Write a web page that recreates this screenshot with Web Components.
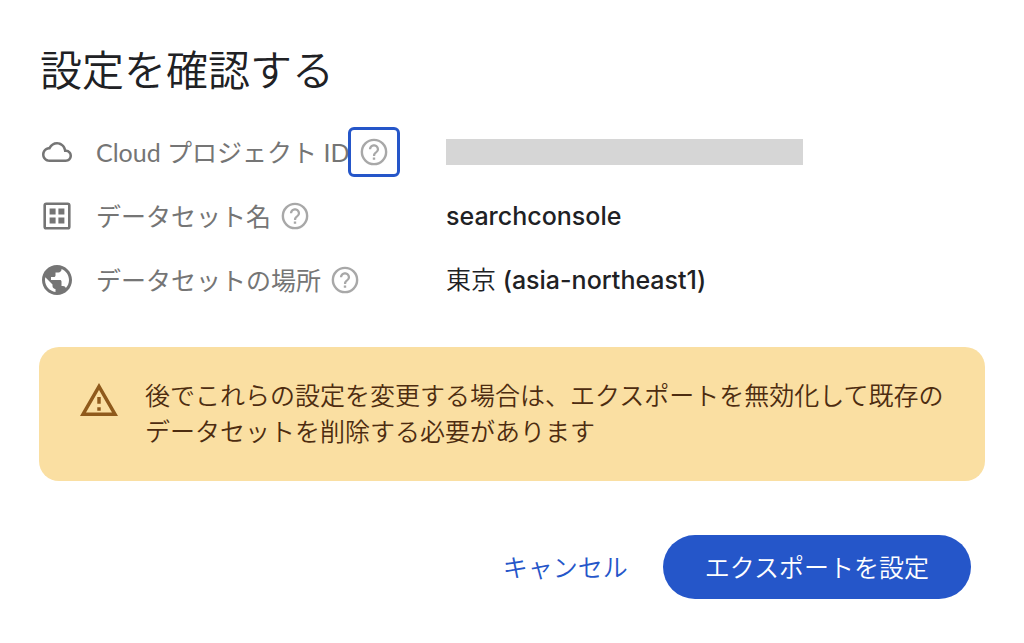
<!DOCTYPE html>
<html lang="ja">
<head>
  <meta charset="utf-8">
  <meta name="viewport" content="width=device-width, initial-scale=1">
  <title>設定を確認する</title>
  <style>
    body {
      margin: 0;
      background: #fff;
      color: #202124;
      font-family: Lato, 'Noto Sans CJK JP', sans-serif;
      font-size: 25px;
      line-height: 36px;
    }

    .place {
      font-weight: 350;
    }
  </style>
</head>
<body>
  <confirm-dialog>
    <span slot="title">設定を確認する</span>
    <setting-row icon="cloud" highlighted>
      <span slot="label">Cloud プロジェクト ID</span>
      <redacted-value></redacted-value>
    </setting-row>
    <setting-row icon="dataset">
      <span slot="label">データセット名</span>
      searchconsole
    </setting-row>
    <setting-row icon="globe">
      <span slot="label">データセットの場所</span>
      <span class="place">東京</span> (asia-northeast1)
    </setting-row>
    <warning-note slot="note">後でこれらの設定を変更する場合は、エクスポートを無効化して既存のデータセットを削除する必要があります</warning-note>
    <action-button slot="actions">キャンセル</action-button>
    <action-button slot="actions" primary>エクスポートを設定</action-button>
  </confirm-dialog>

  <script>
    const icons = {
      cloud: `<svg viewBox="0 0 24 24"><path d="M19.35 10.04C18.67 6.59 15.64 4 12 4 9.11 4 6.6 5.64 5.35 8.04 2.34 8.36 0 10.91 0 14c0 3.31 2.69 6 6 6h13c2.76 0 5-2.24 5-5 0-2.64-2.05-4.78-4.65-4.96zM19 18H6c-2.21 0-4-1.79-4-4 0-2.05 1.53-3.76 3.56-3.97l1.07-.11.5-.95C8.08 7.14 9.94 6 12 6c2.62 0 4.88 1.86 5.39 4.43l.3 1.5 1.53.11c1.56.1 2.78 1.41 2.78 2.96 0 1.65-1.35 3-3 3z"/></svg>`,
      dataset: `<svg viewBox="0 0 30 30"><rect x="2.7" y="2.7" width="24.6" height="24.6" rx="1.6" fill="none" stroke="currentColor" stroke-width="2.6"/><path d="M7.6 7.6h6v6h-6zM16.4 7.6h6v6h-6zM7.6 16.4h6v6h-6zM16.4 16.4h6v6h-6z"/></svg>`,
      globe: `<svg viewBox="2 2 20 20"><path d="M12 2C6.48 2 2 6.48 2 12s4.48 10 10 10 10-4.48 10-10S17.52 2 12 2zm-1 17.93c-3.95-.49-7-3.85-7-7.93 0-.62.08-1.21.21-1.79L9 15v1c0 1.1.9 2 2 2v1.93zm6.9-2.54c-.26-.81-1-1.39-1.9-1.39h-1v-3c0-.55-.45-1-1-1H8v-2h2c.55 0 1-.45 1-1V7h2c1.1 0 2-.9 2-2v-.41c2.93 1.19 5 4.06 5 7.41 0 2.08-.8 3.97-2.1 5.39z"/></svg>`
    };

    // Page frame: title, list of settings, note and buttons
    class ConfirmDialog extends HTMLElement {
      connectedCallback() {
        this.attachShadow({ mode: 'open' }).innerHTML = `
          <style>
            :host {
              display: block;
              padding: 40px 39px;
            }

            h1 {
              margin: 0 0 20px;
              padding-left: 1px;
              font-size: 42px;
              font-weight: 350;
              line-height: 60px;
            }

            .note {
              margin-top: 35px;
            }

            .actions {
              display: flex;
              justify-content: flex-end;
              margin-top: 54px;
              padding-right: 14px;
            }
          </style>
          <h1><slot name="title"></slot></h1>
          <div><slot></slot></div>
          <div class="note"><slot name="note"></slot></div>
          <div class="actions"><slot name="actions"></slot></div>
        `;
      }
    }

    class SettingRow extends HTMLElement {
      connectedCallback() {
        this.attachShadow({ mode: 'open' }).innerHTML = `
          <style>
            :host {
              display: grid;
              grid-template-columns: 407px 1fr;
              align-items: center;
              min-height: 64px;
            }

            .name {
              display: flex;
              align-items: center;
              padding-left: 3px;
              color: #757575;
              white-space: nowrap;
            }

            .icon {
              flex: none;
              width: 30px;
              height: 30px;
              margin-right: 24px;
            }

            .icon svg {
              display: block;
              fill: currentColor;
            }

            .label {
              font-weight: 400;
            }

            .value {
              font-family: Inter, 'Noto Sans CJK JP', sans-serif;
              font-weight: 500;
            }
          </style>
          <div class="name">
            <span class="icon">${icons[this.getAttribute('icon')]}</span>
            <span class="label"><slot name="label"></slot></span>
            <help-button ${this.hasAttribute('highlighted') ? 'highlighted' : ''}></help-button>
          </div>
          <div class="value"><slot></slot></div>
        `;
      }
    }

    class HelpButton extends HTMLElement {
      connectedCallback() {
        this.attachShadow({ mode: 'open' }).innerHTML = `
          <style>
            :host {
              display: block;
              margin-left: 8px;
            }

            button {
              position: relative;
              display: block;
              width: 32px;
              height: 32px;
              padding: 0;
              border: none;
              background: none;
              color: #a8a8a8;
              cursor: pointer;
            }

            svg {
              position: relative;
              display: block;
            }

            button:focus {
              outline: none;
            }

            /* focus ring, lies over the end of the label */
            :host([highlighted]) button::before,
            button:focus-visible::before {
              content: '';
              position: absolute;
              inset: -9px -10px;
              border: 3px solid #2556c9;
              border-radius: 6px;
              background: #fff;
            }
          </style>
          <button type="button" aria-label="ヘルプ">
            <svg viewBox="0 0 24 24" fill="currentColor">
              <circle cx="12" cy="12" r="9.1" fill="none" stroke="currentColor" stroke-width="1.8"/>
              <path d="M11.1 17.9h1.8v-1.8h-1.8zM12 6.2c-2.1 0-3.8 1.7-3.8 3.8h1.7c0-1.2.9-2.1 2.1-2.1s2.1.9 2.1 2.1c0 2-2.9 1.8-2.9 5h1.7c0-2.2 2.9-2.5 2.9-5 0-2.1-1.7-3.8-3.8-3.8z"/>
            </svg>
          </button>
        `;
      }
    }

    class RedactedValue extends HTMLElement {
      connectedCallback() {
        this.attachShadow({ mode: 'open' }).innerHTML = `
          <style>
            :host {
              display: block;
              max-width: 357px;
              height: 26px;
              background: #d6d6d6;
            }
          </style>
        `;
      }
    }

    class WarningNote extends HTMLElement {
      connectedCallback() {
        this.attachShadow({ mode: 'open' }).innerHTML = `
          <style>
            :host {
              display: flex;
              align-items: flex-start;
              gap: 27px;
              padding: 30px 38px 32px 41px;
              border-radius: 20px;
              background: #fadfa2;
              color: #4d2c10;
              font-weight: 350;
            }

            svg {
              flex: none;
              width: 38px;
              height: 33px;
              margin-top: 6px;
              fill: #8f5a1c;
            }

            p {
              margin: 0;
            }
          </style>
          <svg viewBox="1 2 22 19"><path d="M12 5.99L19.53 19H4.47L12 5.99M12 2L1 21h22L12 2zm1 14h-2v2h2v-2zm0-6h-2v4h2v-4z"/></svg>
          <p><slot></slot></p>
        `;
      }
    }

    class ActionButton extends HTMLElement {
      connectedCallback() {
        this.attachShadow({ mode: 'open' }).innerHTML = `
          <style>
            :host {
              display: block;
            }

            button {
              height: 64px;
              padding: 0 35px;
              border: none;
              border-radius: 32px;
              background: none;
              color: #2556c9;
              font: inherit;
              font-weight: 350;
              cursor: pointer;
            }

            :host([primary]) button {
              padding: 0 42px;
              background: #2556c9;
              color: #fff;
            }
          </style>
          <button type="button"><slot></slot></button>
        `;
      }
    }

    customElements.define('help-button', HelpButton);
    customElements.define('redacted-value', RedactedValue);
    customElements.define('setting-row', SettingRow);
    customElements.define('warning-note', WarningNote);
    customElements.define('action-button', ActionButton);
    customElements.define('confirm-dialog', ConfirmDialog);
  </script>
</body>
</html>
